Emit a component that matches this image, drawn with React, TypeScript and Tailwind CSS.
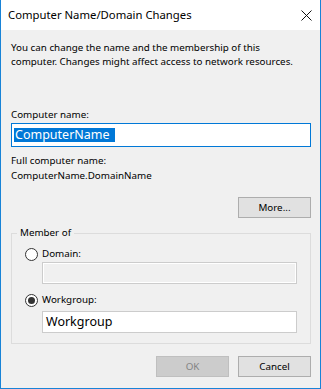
import React from "react";

// Windows 10 style "Computer Name/Domain Changes" dialog
const FONT = { fontFamily: '"Noto Sans", "Open Sans", Arial, sans-serif' };

function Radio({ checked }: { checked?: boolean }) {
  return (
    <span className="flex h-[13px] w-[13px] items-center justify-center rounded-full border border-[#333333] bg-white">
      {checked && <span className="h-[7px] w-[7px] rounded-full bg-[#333333]" />}
    </span>
  );
}

function Button({ label, disabled }: { label: string; disabled?: boolean }) {
  return (
    <button
      className={`h-[21px] w-[73px] border text-[9.8px] leading-none ${
        disabled
          ? "border-[#bfbfbf] bg-[#cccccc] text-[#838383]"
          : "border-[#adadad] bg-[#e1e1e1] text-black"
      }`}
    >
      {label}
    </button>
  );
}

export default function App() {
  return (
    <div
      className="flex h-[389px] w-[321px] flex-col border-x border-b border-[#1883d7] bg-[#f0f0f0] text-black"
      style={FONT}
    >
      {/* Title bar */}
      <div className="flex h-[30px] items-center justify-between bg-white pl-[7px] pr-[8px]">
        <span className="text-[11.3px]">Computer Name/Domain Changes</span>
        <svg width="11" height="11" viewBox="0 0 11 11">
          <path d="M0.5 0.5 L10.5 10.5 M10.5 0.5 L0.5 10.5" stroke="#111" strokeWidth="1" />
        </svg>
      </div>

      {/* Body */}
      <div className="flex flex-1 flex-col pl-[10px] pr-[9px] text-[9.8px]">
        <p className="mt-[11px] leading-[14px]">
          You can change the name and the membership of this
          <br />
          computer. Changes might affect access to network resources.
        </p>

        <div className="mt-[39px] leading-[14px]">Computer name:</div>
        <div className="mt-[1px] flex h-[24px] items-center border border-[#0078d7] bg-white pl-[2px] text-[12.5px]">
          <span className="bg-[#0078d7] pr-[5px] pl-[1px] leading-[14px] text-white">ComputerName</span>
        </div>

        <div className="mt-[7px] leading-[14px]">Full computer name:</div>
        <div className="mt-[1px] leading-[14px]">ComputerName.DomainName</div>

        <div className="mt-[14px] flex justify-end">
          <Button label="More..." />
        </div>

        {/* Member of group */}
        <div className="relative mt-[15px] h-[111px] border border-[#dcdcdc] pl-[13px] pr-[13px]">
          <span className="absolute -top-[8px] left-[5px] bg-[#f0f0f0] px-[3px] leading-[14px]">Member of</span>
          <div className="mt-[13px] flex items-center gap-[4px] leading-[14px]">
            <Radio />
            <span>Domain:</span>
          </div>
          <div className="mt-[1px] ml-[17px] h-[22px] border border-[#cccccc] bg-[#f0f0f0] shadow-[inset_0_0_0_1px_#ffffff]" />
          <div className="mt-[9px] flex items-center gap-[4px] leading-[14px]">
            <Radio checked />
            <span>Workgroup:</span>
          </div>
          <div className="mt-[4px] ml-[17px] flex h-[22px] items-center border border-[#cccccc] bg-white pl-[3px] text-[12.5px]">
            Workgroup
          </div>
        </div>

        <div className="mt-[12px] flex justify-end gap-[9px]">
          <Button label="OK" disabled />
          <Button label="Cancel" />
        </div>
      </div>
    </div>
  );
}
